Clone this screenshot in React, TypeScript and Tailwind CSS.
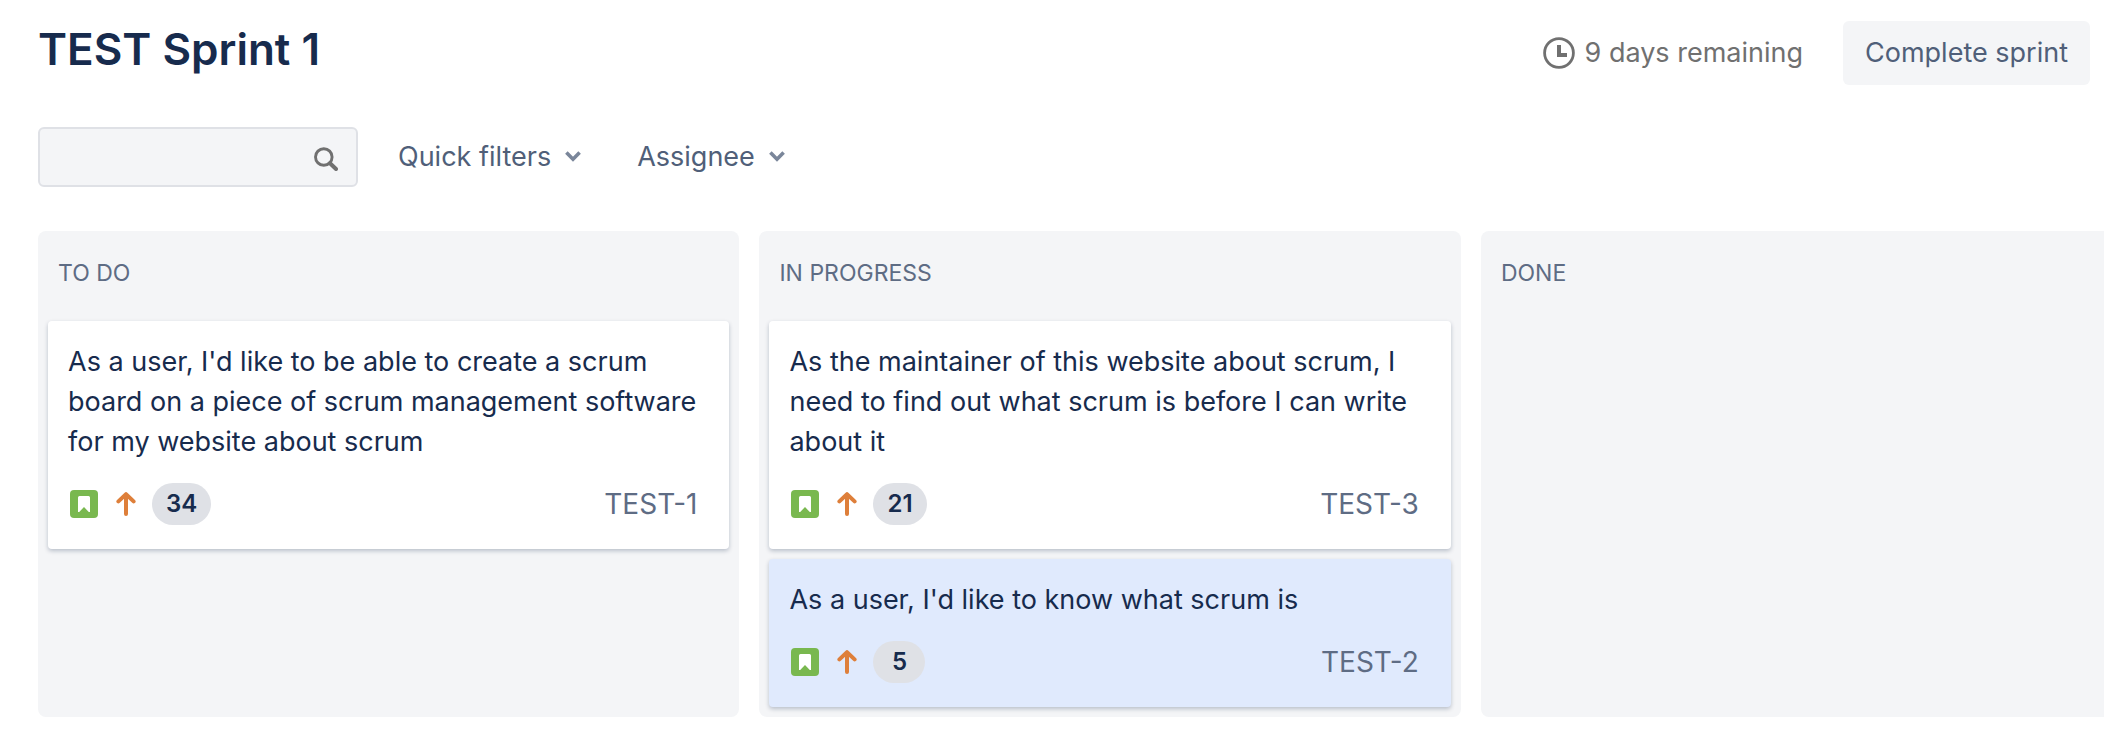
type Issue = {
  id: string;
  summary: string;
  points: number;
  selected?: boolean;
};

type BoardColumn = { title: string; issues: Issue[] };

const columns: BoardColumn[] = [
  {
    title: "TO DO",
    issues: [
      {
        id: "TEST-1",
        summary:
          "As a user, I'd like to be able to create a scrum board on a piece of scrum management software for my website about scrum",
        points: 34,
      },
    ],
  },
  {
    title: "IN PROGRESS",
    issues: [
      {
        id: "TEST-3",
        summary:
          "As the maintainer of this website about scrum, I need to find out what scrum is before I can write about it",
        points: 21,
      },
      {
        id: "TEST-2",
        summary: "As a user, I'd like to know what scrum is",
        points: 5,
        selected: true,
      },
    ],
  },
  { title: "DONE", issues: [] },
];

function ClockIcon() {
  return (
    <svg viewBox="0 0 32 32" className="size-8 shrink-0" fill="none" aria-hidden="true">
      <circle cx="16" cy="16" r="14.4" stroke="#707070" strokeWidth="2.8" />
      <path d="M16 8v10h8" stroke="#707070" strokeWidth="4" />
    </svg>
  );
}

function SearchIcon() {
  return (
    <svg viewBox="0 0 24 24" className="size-6 shrink-0" fill="none" stroke="#707070" aria-hidden="true">
      <circle cx="9.8" cy="10" r="8.3" strokeWidth="2.9" />
      <path d="M16 16.2l6 5.8" strokeWidth="4" strokeLinecap="round" />
    </svg>
  );
}

function ChevronIcon() {
  return (
    <svg viewBox="0 0 16 12" className="h-3 w-4 shrink-0" fill="none" aria-hidden="true">
      <path d="M1.4 1.6L8 8.2l6.6-6.6" stroke="#7a869a" strokeWidth="3.6" />
    </svg>
  );
}

function StoryIcon() {
  return (
    <svg viewBox="0 0 28 28" className="size-7" role="img" aria-label="Story">
      <rect width="28" height="28" rx="4" fill="#79b84f" />
      <path d="M8 7.5A1.5 1.5 0 0 1 9.5 6h9A1.5 1.5 0 0 1 20 7.5V22h-1.2L14 17l-4.8 5H8z" fill="#fff" />
    </svg>
  );
}

function PriorityIcon() {
  return (
    <svg viewBox="0 0 20 24" className="h-6 w-5" fill="none" role="img" aria-label="High priority">
      <path
        d="M10 22V3M2.4 9.4L10 2.2l7.6 7.2"
        stroke="#de7f3a"
        strokeWidth="4"
        strokeLinecap="round"
        strokeLinejoin="round"
      />
    </svg>
  );
}

function FilterButton({ label }: { label: string }) {
  return (
    <button type="button" className="flex items-center gap-[14px] text-[#505f79]">
      {label}
      <ChevronIcon />
    </button>
  );
}

function IssueCard({ issue }: { issue: Issue }) {
  return (
    <article
      className={`rounded-sm px-5 pt-[21px] pb-6 shadow-[0_2px_4px_rgba(9,30,66,0.25)] ${
        issue.selected ? "bg-[#e0eafd]" : "bg-white"
      }`}
    >
      <p className="text-[27px] leading-10 text-[#172b4d]">{issue.summary}</p>
      <div className="mt-[21px] flex items-center pr-3 pl-0.5">
        <StoryIcon />
        <span className="ml-[18px]">
          <PriorityIcon />
        </span>
        <span className="ml-4 flex h-[42px] min-w-[52px] items-center justify-center rounded-full bg-[#dfe1e6] px-[14px] text-2xl font-semibold text-[#172b4d]">
          {issue.points}
        </span>
        <a href={`#${issue.id}`} className="ml-auto text-[28px] leading-[42px] text-[#5e6c84]">
          {issue.id}
        </a>
      </div>
    </article>
  );
}

export default function App() {
  return (
    <main className="min-h-screen overflow-hidden bg-white pl-[38px] font-['Inter','Liberation_Sans',sans-serif] text-[27px] leading-10">
      <header className="flex items-center justify-between pt-[21px] pr-[14px]">
        <h1 className="pb-2 text-[44px] leading-[52px] font-semibold text-[#172b4d]">TEST Sprint 1</h1>
        <div className="flex items-center gap-10">
          <div className="flex items-center gap-[10px] text-[#707070]">
            <ClockIcon />
            <span>9 days remaining</span>
          </div>
          <button type="button" className="h-16 rounded-md bg-[#f4f5f7] px-[22px] text-[#505f79]">
            Complete sprint
          </button>
        </div>
      </header>

      <div className="mt-[42px] flex items-center">
        <label className="flex h-[60px] w-80 items-center rounded-md border-2 border-[#dfe1e6] bg-[#f4f5f7] pt-1 pr-[18px] pl-4">
          <input type="text" aria-label="Search board" className="min-w-0 flex-1 bg-transparent outline-none" />
          <SearchIcon />
        </label>
        <div className="ml-10 flex items-center gap-14">
          <FilterButton label="Quick filters" />
          <FilterButton label="Assignee" />
        </div>
      </div>

      <div className="mt-11 grid auto-cols-[calc(34%-1px)] grid-flow-col gap-5">
        {columns.map((column) => (
          <section key={column.title} className="rounded-lg bg-[#f4f5f7] px-[10px] pb-[10px]">
            <h2 className="flex h-[90px] items-center px-[10px] pb-1.5 text-[23px] text-[#5e6c84]">
              {column.title}
            </h2>
            <div className="flex flex-col gap-[10px]">
              {column.issues.map((issue) => (
                <IssueCard key={issue.id} issue={issue} />
              ))}
            </div>
          </section>
        ))}
      </div>
    </main>
  );
}
